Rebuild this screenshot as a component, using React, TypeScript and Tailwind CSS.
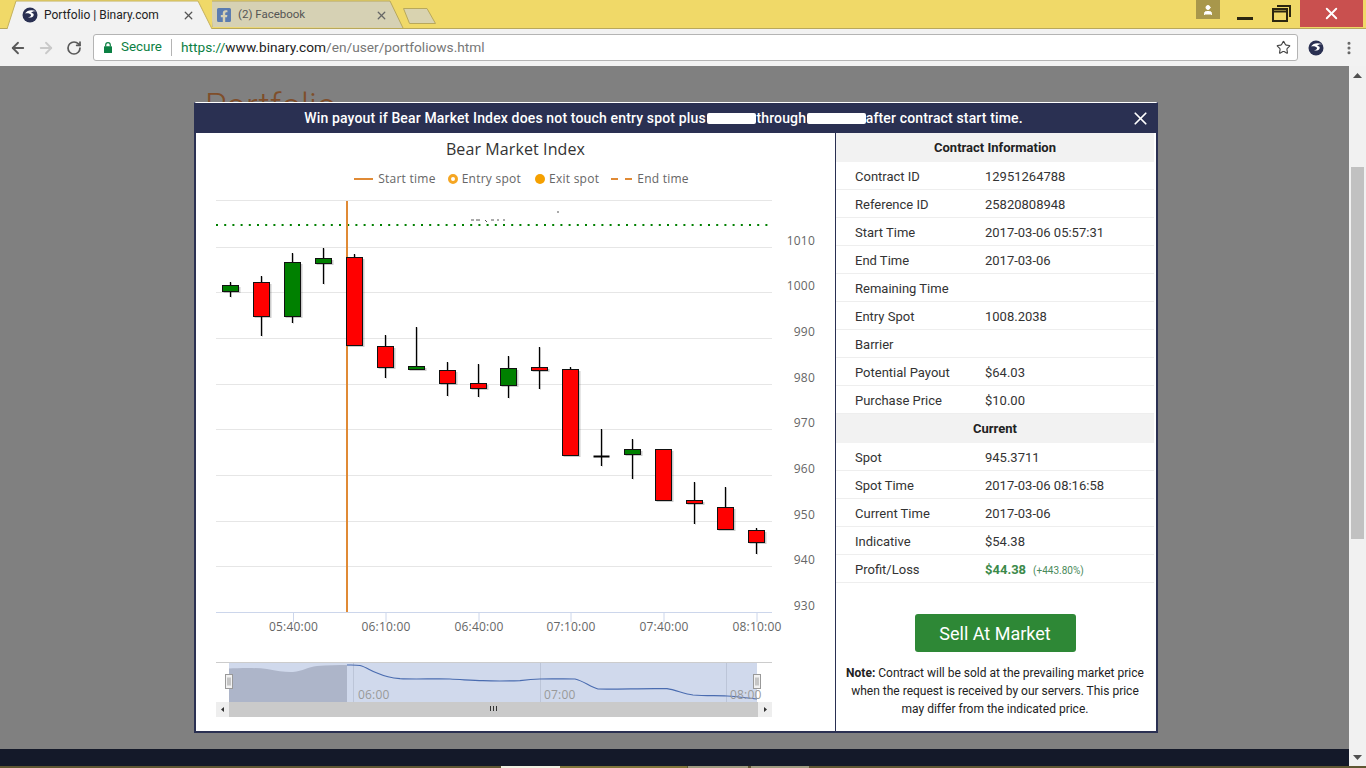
import { Star, ArrowLeft, ArrowRight, RotateCw, X, User, EllipsisVertical } from 'lucide-react';
import { FaFacebookSquare } from 'react-icons/fa';

type Candle = { x: number; top: number; bottom: number; hi: number; lo: number; color: string };

const GREEN = '#008000';
const RED = '#ff0000';

const candles: Candle[] = [
  { x: 230.5, top: 285.5, bottom: 291.5, hi: 282, lo: 297, color: GREEN },
  { x: 261.5, top: 282.5, bottom: 316.5, hi: 276, lo: 336, color: RED },
  { x: 292.5, top: 262.5, bottom: 316.5, hi: 253, lo: 323, color: GREEN },
  { x: 323.5, top: 258.5, bottom: 263.5, hi: 248, lo: 284, color: GREEN },
  { x: 354.5, top: 257.5, bottom: 345.5, hi: 254, lo: 345, color: RED },
  { x: 385.5, top: 346.5, bottom: 367.5, hi: 335, lo: 378, color: RED },
  { x: 416.5, top: 366.5, bottom: 369.5, hi: 327, lo: 369, color: GREEN },
  { x: 447.5, top: 370.5, bottom: 383.5, hi: 362, lo: 396, color: RED },
  { x: 478.5, top: 383.5, bottom: 388.5, hi: 364, lo: 397, color: RED },
  { x: 508.5, top: 368.5, bottom: 385.5, hi: 356, lo: 398, color: GREEN },
  { x: 539.5, top: 367.5, bottom: 370.5, hi: 347, lo: 389, color: RED },
  { x: 570.5, top: 369.5, bottom: 455.5, hi: 367, lo: 455, color: RED },
  { x: 601.5, top: 456.5, bottom: 456.5, hi: 429, lo: 466, color: '#000000' },
  { x: 632.5, top: 449.5, bottom: 454.5, hi: 439, lo: 479, color: GREEN },
  { x: 663.5, top: 449.5, bottom: 500.5, hi: 449, lo: 500, color: RED },
  { x: 694.5, top: 500.5, bottom: 503.5, hi: 482, lo: 524, color: RED },
  { x: 725.5, top: 507.5, bottom: 529.5, hi: 487, lo: 529, color: RED },
  { x: 756.5, top: 530.5, bottom: 542.5, hi: 528, lo: 554, color: RED },
];

const gridLines = [200.5, 247.5, 292.5, 338.5, 384.5, 429.5, 475.5, 521.5, 566.5];
const yLabels = [
  { y: 245, t: '1010' },
  { y: 290, t: '1000' },
  { y: 336, t: '990' },
  { y: 382, t: '980' },
  { y: 427, t: '970' },
  { y: 473, t: '960' },
  { y: 519, t: '950' },
  { y: 564, t: '940' },
  { y: 610, t: '930' },
];
const xLabels = [
  { x: 293.5, t: '05:40:00' },
  { x: 386, t: '06:10:00' },
  { x: 479, t: '06:40:00' },
  { x: 571, t: '07:10:00' },
  { x: 664, t: '07:40:00' },
  { x: 757, t: '08:10:00' },
];

const contractRows = [
  ['Contract ID', '12951264788'],
  ['Reference ID', '25820808948'],
  ['Start Time', '2017-03-06 05:57:31'],
  ['End Time', '2017-03-06'],
  ['Remaining Time', ''],
  ['Entry Spot', '1008.2038'],
  ['Barrier', ''],
  ['Potential Payout', '$64.03'],
  ['Purchase Price', '$10.00'],
];

const currentRows = [
  ['Spot', '945.3711'],
  ['Spot Time', '2017-03-06 08:16:58'],
  ['Current Time', '2017-03-06'],
  ['Indicative', '$54.38'],
];

const BinaryIcon = ({ size }: { size: number }) => (
  <svg width={size} height={size} viewBox="0 0 16 16" className="shrink-0">
    <circle cx="8" cy="8" r="7.5" fill="#2a3052" />
    <path d="M3 6.5C5 3.2 9.5 2.2 14 4.2 11.5 4 9.8 4.7 9.2 5.9 11 5.7 12.2 6.8 11.6 8.4 10.8 10.4 8.4 11 6 10.2 8 10 9.2 9.2 9 8 8.6 6.6 5.6 6 3 6.5Z" fill="#ffffff" />
  </svg>
);

const TableHeader = ({ title }: { title: string }) => (
  <div className="h-[29px] bg-[#f2f2f2] flex items-center justify-center text-[13px] font-bold text-[#222]">{title}</div>
);

const Row = ({ label, children }: { label: string; children?: React.ReactNode }) => (
  <div className="h-[28px] pt-[2px] border-b border-[#eeeeee] flex items-center text-[13px] text-[#333]">
    <div className="w-[149px] pl-[19px] shrink-0">{label}</div>
    <div className="flex items-baseline">{children}</div>
  </div>
);

const Chart = () => (
  <svg width={638} height={540} viewBox="196 190 638 540" fontFamily="'Open Sans', sans-serif" letterSpacing={0.2} className="block">
    {gridLines.map((y) => (
      <line key={y} x1={216} x2={772} y1={y} y2={y} stroke="#e6e6e6" />
    ))}
    <line x1={216} x2={772} y1={612.5} y2={612.5} stroke="#ccd6eb" />
    {xLabels.map((l) => (
      <g key={l.t}>
        <line x1={l.x} x2={l.x} y1={612} y2={622} stroke="#ccd6eb" />
        <text x={l.x} y={631} fontSize={12} fill="#666666" textAnchor="middle">{l.t}</text>
      </g>
    ))}
    {yLabels.map((l) => (
      <text key={l.t} x={815} y={l.y} fontSize={12} fill="#666666" textAnchor="end">{l.t}</text>
    ))}

    {/* barrier line and what is left of its label */}
    <line x1={216} x2={772} y1={225} y2={225} stroke="#008000" strokeWidth={2} strokeDasharray="2 6.2" />
    <path d="M471 220h3M476 220h4M485 220l2 2M491 220h3M497 220h2M503 220h2M557 212h2" stroke="#555555" strokeWidth={1} />
    <line x1={347} x2={347} y1={201} y2={612} stroke="#e08a35" strokeWidth={2} />

    {candles.map((c) => (
      <g key={c.x}>
        {c.bottom > c.top && <rect x={c.x - 7} y={c.top + 1.5} width={17} height={c.bottom - c.top} fill="#000000" opacity={0.2} />}
        <line x1={c.x + 1} x2={c.x + 1} y1={c.hi + 1} y2={c.lo + 1} stroke="#000000" strokeWidth={1} opacity={0.12} />
        <line x1={c.x} x2={c.x} y1={c.hi} y2={c.lo} stroke="#000000" strokeWidth={1.3} />
        {c.bottom > c.top ? (
          <rect x={c.x - 8} y={c.top} width={16} height={c.bottom - c.top} fill={c.color} stroke="#111111" strokeWidth={1} />
        ) : (
          <line x1={c.x - 8} x2={c.x + 8} y1={c.top} y2={c.top} stroke="#000000" strokeWidth={2} />
        )}
      </g>
    ))}

    {/* navigator */}
    <rect x={229} y={662} width={528} height={40} fill="#d0d9ec" />
    <path d="M229 668.5C240 668 255 667.5 267 669 278 671 286 672.5 293 672 303 671 308 667 317 666 327 665 338 665 347 665V702H229Z" fill="#adb5c9" />
    <path d="M353.5 662V702M540.5 662V702M726.5 662V702" stroke="#bcc5d8" />
    <line x1={216} x2={772} y1={662.5} y2={662.5} stroke="#cccccc" />
    <path
      d="M347 665C352 665 356 664.8 360 665.5 366 667 371 671 377 673 385 676.5 392 678 400 678.7 415 679.5 435 678.5 450 679 462 679.5 472 680.5 483 680.7 495 681.2 510 681 520 680.7 528 679.5 534 679 540 679 552 679 565 678.5 575 679 584 681 590 687 598 689 620 689.5 645 688 667 688.7 676 690 684 694 693 695 705 696 716 695.5 727 696 737 696.5 748 698 757 699"
      fill="none"
      stroke="#4a6cb0"
      strokeWidth={1.2}
    />
    <text x={358} y={699} fontSize={12} fill="#999999">06:00</text>
    <text x={544} y={699} fontSize={12} fill="#999999">07:00</text>
    <text x={730} y={699} fontSize={12} fill="#999999">08:00</text>

    {[229, 757].map((x) => (
      <g key={x}>
        <rect x={x - 3.5} y={674.5} width={7} height={14} fill="#f2f2f2" stroke="#999999" />
        <path d={`M${x - 1} 677.5v8M${x + 1} 677.5v8`} stroke="#999999" />
      </g>
    ))}

    <rect x={216} y={702} width={556} height={15} fill="#cacaca" />
    <rect x={216} y={702} width={13} height={15} fill="#eeeeee" />
    <rect x={758} y={702} width={14} height={15} fill="#eeeeee" />
    <path d="M224 707v5l-3-2.5ZM764 707v5l3-2.5Z" fill="#333333" />
    <path d="M490.5 706v5M493.5 706v5M496.5 706v5" stroke="#333333" />
  </svg>
);

const Modal = () => (
  <div className="absolute left-[194px] top-[102px] w-[964px] h-[631px] flex flex-col border-x-2 border-b-2 border-t border-x-[#2a3052] border-b-[#2a3052] border-t-white bg-white font-['Roboto',sans-serif]">
    <div className="h-[30px] shrink-0 bg-[#2a3052] relative flex items-center justify-center pr-[25px] text-[14px] font-medium tracking-[0.15px] text-white">
      <span className="whitespace-nowrap">
        Win payout if Bear Market Index does not touch entry spot plus{' '}
        <span className="inline-block -ml-[2px] w-[49px] h-[11px] rounded-[2px] bg-white align-middle" />
        through{' '}
        <span className="inline-block -ml-[3px] w-[59px] h-[11px] rounded-[2px] bg-white align-middle" />
        after contract start time.
      </span>
      <X size={21} strokeWidth={2} className="absolute right-[5px] top-[5px] text-white" />
    </div>

    <div className="flex flex-1 min-h-0">
      <div className="w-[640px] shrink-0 border-r border-[#2a3052]">
        <div className="pt-[5px] h-[27px] leading-[22px] text-center text-[16px] tracking-[0.1px] text-[#333] font-['Open_Sans',sans-serif]">
          Bear Market Index
        </div>
        <div className="mt-[8px] h-[22px] pl-[12px] flex items-center justify-center text-[12px] tracking-[0.25px] text-[#666] font-['Open_Sans',sans-serif]">
          <span className="w-[19px] h-[2px] bg-[#e08a35] mr-[5px]" />
          <span className="mr-[12px]">Start time</span>
          <span className="w-[10px] h-[10px] rounded-full border-[3px] border-[#f5a623] mr-[4px]" />
          <span className="mr-[14px]">Entry spot</span>
          <span className="w-[10px] h-[10px] rounded-full bg-[#f5a000] mr-[4px]" />
          <span className="mr-[12px]">Exit spot</span>
          <span className="w-[7px] h-[2px] bg-[#e08a35] mr-[7px]" />
          <span className="w-[7px] h-[2px] bg-[#e08a35] mr-[5px]" />
          <span>End time</span>
        </div>
        <Chart />
      </div>

      <div className="flex-1 min-w-0 pr-[2px]">
        <TableHeader title="Contract Information" />
        {contractRows.map(([label, value]) => (
          <Row key={label} label={label}>{value}</Row>
        ))}
        <TableHeader title="Current" />
        {currentRows.map(([label, value]) => (
          <Row key={label} label={label}>{value}</Row>
        ))}
        <Row label="Profit/Loss">
          <span className="font-bold text-[#3b8a4a]">$44.38</span>
          <span className="ml-[7px] text-[10px] text-[#4a8a5a]">(+443.80%)</span>
        </Row>

        <div className="mt-[31px] flex justify-center">
          <button className="w-[161px] h-[38px] rounded-[3px] bg-[#2e8836] text-white text-[18px]">Sell At Market</button>
        </div>
        <p className="mt-[12px] px-[10px] text-center text-[12px] leading-[18px] text-[#222]">
          <b>Note:</b> Contract will be sold at the prevailing market price when the request is received by our servers. This price may differ from the indicated price.
        </p>
      </div>
    </div>
  </div>
);

const TitleBar = () => (
  <div className="h-[29px] shrink-0 bg-[#f0d968] border-b border-[#b8a85c] flex relative font-['Roboto',sans-serif] text-[12px]">
    <div className="relative w-[205px] ml-[7px] flex items-center pt-[2px] pl-[15px] pr-[17px] text-[#222]">
      <svg className="absolute left-0 top-0" width="206" height="29" viewBox="0 0 206 29">
        <path d="M0 29 9 1H191L205 29" fill="#f2f2f2" stroke="#c4b15c" />
      </svg>
      <span className="relative flex items-center gap-[6px] w-full">
        <BinaryIcon size={16} />
        <span className="flex-1">Portfolio | Binary.com</span>
        <X size={13} strokeWidth={2.4} className="text-[#555]" />
      </span>
    </div>
    <div className="relative w-[191px] flex items-center pt-[2px] pl-[4px] pr-[15px] text-[#555]">
      <svg className="absolute left-0 top-0" width="192" height="29" viewBox="0 0 192 29">
        <path d="M0 27 -2 1H178L191 28" fill="#d6d1b4" stroke="#b8a85c" />
      </svg>
      <span className="relative flex items-center gap-[6px] w-full">
        <FaFacebookSquare size={16} className="text-[#5b7cb0]" />
        <span className="flex-1 text-[11.5px]">(2) Facebook</span>
        <X size={13} strokeWidth={2.4} className="text-[#666]" />
      </span>
    </div>
    <svg className="ml-[-1px] mt-[7px]" width="36" height="18" viewBox="0 0 36 18">
      <path d="M1.5 1.5H25L33.5 16.5H7.5Z" fill="#d9d3b0" stroke="#b8a85c" />
    </svg>

    <div className="ml-auto flex items-start">
      <div className="w-[24px] h-[19px] bg-[#a8974b] flex items-center justify-center mr-[10px]">
        <User size={12} fill="#ffffff" className="text-white" />
      </div>
      <div className="w-[30px] h-[28px] flex justify-center pt-[17px] mr-[12px]">
        <div className="w-[16px] h-[3px] bg-[#2b2610]" />
      </div>
      <svg className="mt-[5px] mr-[8px]" width="20" height="18" viewBox="0 0 20 18" fill="none" stroke="#2b2610" strokeWidth="2">
        <rect x="1" y="4" width="14" height="12" />
        <path d="M1 6.5H15" strokeWidth="2" />
        <path d="M5 1H18V12" />
      </svg>
      <div className="w-[63px] h-[27px] bg-[#c9504f] flex items-center justify-center mr-[3px]">
        <X size={19} strokeWidth={2.4} className="text-white" />
      </div>
    </div>
  </div>
);

const Toolbar = () => (
  <div className="h-[37px] shrink-0 bg-[#f2f2f2] flex items-center font-['Roboto',sans-serif]">
    <ArrowLeft size={18} strokeWidth={2.4} className="ml-[9px] text-[#5a5a5a]" />
    <ArrowRight size={18} strokeWidth={2.4} className="ml-[10px] text-[#c9c9c9]" />
    <RotateCw size={16} strokeWidth={2.6} className="ml-[11px] text-[#5a5a5a]" />
    <div className="ml-[11px] w-[1205px] h-[27px] bg-white border border-[#b4b4b4] rounded-[3px] flex items-center">
      <svg className="ml-[10px]" width="8" height="11" viewBox="0 0 8 11">
        <path d="M1.7 4.5V3a2.3 2.3 0 0 1 4.6 0v1.5" fill="none" stroke="#0b8043" strokeWidth="1.2" />
        <rect x="0" y="4.2" width="8" height="6.8" rx="0.5" fill="#0b8043" />
      </svg>
      <span className="ml-[9px] text-[13.4px] text-[#0b8043]">Secure</span>
      <span className="ml-[9px] w-px h-[17px] bg-[#b4b4b4]" />
      <span className="ml-[9px] text-[13.7px]">
        <span className="text-[#0b8043]">https://</span>
        <span className="text-[#222]">www.binary.com</span>
        <span className="text-[#777]">/en/user/portfoliows.html</span>
      </span>
      <Star size={15} strokeWidth={1.8} className="ml-auto mr-[6px] text-[#444]" />
    </div>
    <span className="ml-[10px]"><BinaryIcon size={16} /></span>
    <EllipsisVertical size={16} strokeWidth={2.6} className="ml-[17px] text-[#666]" />
  </div>
);

export default function App() {
  return (
    <div className="relative w-[1366px] h-[768px] overflow-hidden flex flex-col bg-[#808080]">
      <TitleBar />
      <Toolbar />
      <div className="flex-1 min-h-0 flex">
        <div className="flex-1 min-w-0 flex flex-col">
          <div className="flex-1 pl-[205px] pt-[20px] text-[35px] leading-[42px] text-[#7f4e2a] font-['Roboto',sans-serif] font-light">
            Portfolio
          </div>
          <div className="h-[17px] bg-[#141929]" />
        </div>
        <div className="w-[17px] bg-[#f1f1f1] flex flex-col items-center">
          <svg className="mt-[7px]" width="9" height="5" viewBox="0 0 9 5"><path d="M4.5 0 9 5H0Z" fill="#505050" /></svg>
          <div className="mt-[89px] w-[13px] h-[372px] bg-[#c1c1c1]" />
          <svg className="mt-auto mb-[6px]" width="9" height="5" viewBox="0 0 9 5"><path d="M0 0H9L4.5 5Z" fill="#505050" /></svg>
        </div>
      </div>
      <div className="h-[2px] shrink-0 flex bg-[#5f5732]">
        <div className="ml-[501px] w-[59px] bg-[#efefdf]" />
        <div className="w-[127px] bg-[#80763a]" />
        <div className="ml-px w-[60px] bg-[#a09c80]" />
        <div className="ml-[3px] w-[58px] bg-[#a09c80]" />
      </div>
      <Modal />
    </div>
  );
}
